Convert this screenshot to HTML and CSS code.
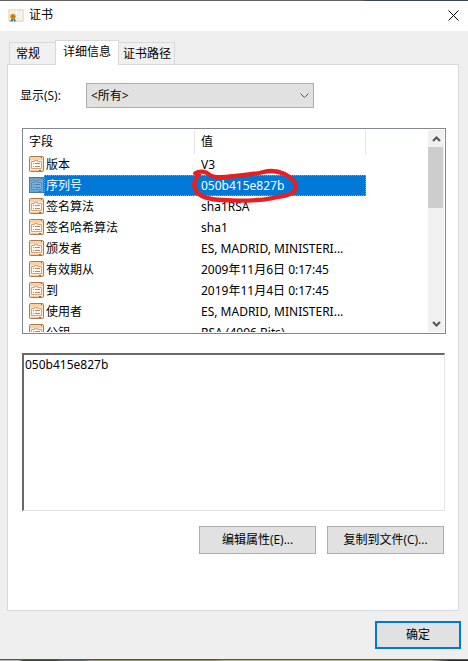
FILE: index.html
```html
<!DOCTYPE html>
<html lang="zh-CN">
<head>
<meta charset="utf-8">
<meta name="viewport" content="width=device-width, initial-scale=1">
<title>证书</title>
<link rel="stylesheet" href="styles.css">
</head>
<body>
<svg class="defs" aria-hidden="true">
  <symbol id="field" viewBox="0 0 15 16">
    <rect x=".5" y=".5" width="14" height="15" rx="1" fill="#fdebd8" stroke="#a87c54"/>
    <path d="M1 2.500H14" stroke="#f9cfa4" stroke-width="3"/>
    <path d="M12 1.500h1" stroke="#8a6240"/>
    <path d="M1 14.500H14" stroke="#f4cba2"/>
    <path d="M2.500 12.500v-7h3v-1h3v1h4v7z" fill="#fff8f0" stroke="#d2a47c"/>
    <path d="M4 7.500h1M6 7.500h5M4 10.500h1M6 10.500h5" stroke="#b88a60"/>
    <path d="M10 14.500h2" stroke="#8a6240"/>
  </symbol>
</svg>
<main class="window">
  <header class="titlebar">
    <svg class="app-icon" viewBox="0 0 16 14" aria-hidden="true">
      <rect x="1" y="1" width="14" height="11" fill="#fffdf8" stroke="#e7c79b"/>
      <path d="M3 3.500h5M9 3.500h4M8 6.500h5M8 9.500h5" stroke="#e9ebee" stroke-width="2"/>
      <path d="M3.500 9L2 13l2-1 1 1 .5-3 1 3 1-1 1 1-2-4z" fill="#2f78d2"/>
      <circle cx="5" cy="7.500" r="2.800" fill="#d99412"/>
      <circle cx="5" cy="7.500" r="1.300" fill="#b8720c"/>
    </svg>
    <h1>证书</h1>
    <button class="close" type="button" aria-label="关闭"><svg viewBox="0 0 11 11" aria-hidden="true"><path d="M.5.5l10 10M10.500.5l-10 10" fill="none" stroke="#000"/></svg></button>
  </header>
  <div class="content">
    <div class="tabs" role="tablist">
      <button class="tab" type="button" role="tab">常规</button>
      <button class="tab active" type="button" role="tab" aria-selected="true">详细信息</button>
      <button class="tab" type="button" role="tab">证书路径</button>
    </div>
    <section class="panel" role="tabpanel">
      <div class="filter">
        <label for="show">显示(S):</label>
        <div class="select-wrap">
          <select id="show"><option>&lt;所有&gt;</option></select>
          <svg class="chevron" viewBox="0 0 9 6" aria-hidden="true"><path d="M.5.5l4 4 4-4" fill="none" stroke="#555"/></svg>
        </div>
      </div>
      <div class="list">
        <div class="viewport">
          <table>
            <colgroup><col class="col-field"><col class="col-value"></colgroup>
            <thead><tr><th scope="col">字段</th><th scope="col">值</th></tr></thead>
            <tbody>
              <tr><td><div class="field"><svg><use href="#field"/></svg><span>版本</span></div></td><td><div class="value">V3</div></td></tr>
              <tr class="selected"><td><div class="field"><svg><use href="#field"/></svg><span>序列号</span></div></td><td><div class="value">050b415e827b</div>
                <svg class="mark" viewBox="60 144 330 108" aria-hidden="true">
                  <path d="M76 160C88 152 106 153 118 164C132 175 160 172 195 168C230 163 258 163 280 156C300 151 322 152 342 161C367 174 378 187 378 200C378 216 361 225 330 230C300 235 285 240 260 240C220 243 185 242 160 240C126 241 96 231 84 220C75 209 71 200 73 188C77 176 81 169 87 163" fill="none" stroke="#e81f20" stroke-width="13" stroke-linecap="round" stroke-linejoin="round"/>
                </svg></td></tr>
              <tr><td><div class="field"><svg><use href="#field"/></svg><span>签名算法</span></div></td><td><div class="value">sha1RSA</div></td></tr>
              <tr><td><div class="field"><svg><use href="#field"/></svg><span>签名哈希算法</span></div></td><td><div class="value">sha1</div></td></tr>
              <tr><td><div class="field"><svg><use href="#field"/></svg><span>颁发者</span></div></td><td><div class="value">ES, MADRID, MINISTERI...</div></td></tr>
              <tr><td><div class="field"><svg><use href="#field"/></svg><span>有效期从</span></div></td><td><div class="value">2009年11月6日 0:17:45</div></td></tr>
              <tr><td><div class="field"><svg><use href="#field"/></svg><span>到</span></div></td><td><div class="value">2019年11月4日 0:17:45</div></td></tr>
              <tr><td><div class="field"><svg><use href="#field"/></svg><span>使用者</span></div></td><td><div class="value">ES, MADRID, MINISTERI...</div></td></tr>
              <tr><td><div class="field"><svg><use href="#field"/></svg><span>公钥</span></div></td><td><div class="value">RSA (4096 Bits)</div></td></tr>
            </tbody>
          </table>
        </div>
        <div class="scrollbar">
          <button type="button" aria-label="向上滚动"><svg viewBox="0 0 9 6" aria-hidden="true"><path d="M1 5l3.500-3.500L8 5" fill="none" stroke="#555" stroke-width="2"/></svg></button>
          <div class="thumb"></div>
          <button class="down" type="button" aria-label="向下滚动"><svg viewBox="0 0 9 6" aria-hidden="true"><path d="M1 1l3.500 3.500L8 1" fill="none" stroke="#555" stroke-width="2"/></svg></button>
        </div>
      </div>
      <textarea class="detail" aria-label="字段值" readonly>050b415e827b</textarea>
      <div class="actions">
        <button class="btn" type="button">编辑属性(E)...</button>
        <button class="btn" type="button">复制到文件(C)...</button>
      </div>
    </section>
    <footer class="footer"><button class="btn primary" type="button">确定</button></footer>
  </div>
  <div class="backdrop"></div>
</main>
</body>
</html>
```
FILE: styles.css
```css
* { box-sizing: border-box; }

body {
  margin: 0;
  background: #efefef;
  color: #000;
  font: 12px/16px "Open Sans", "Noto Sans CJK SC", sans-serif;
}

button, select, textarea { font: inherit; color: inherit; margin: 0; border-radius: 0; }

svg { display: block; }

.defs { position: absolute; width: 0; height: 0; }

.window {
  display: flex;
  flex-direction: column;
  min-height: 100vh;
  border-top: 1px solid;
  border-image: linear-gradient(90deg, #636363 77%, #3a4654 78%) 1;
  border-image-width: 1px 0 0;
}

.backdrop {
  height: 2px;
  border-top: 1px solid #55564a;
  background: linear-gradient(90deg, #b5b5b5 4%, #3c4434 5% 12%, #65686a 13% 18%, #9a8b68 19% 46%, #b9b88c 48% 92%, #2c2c2c 96%);
}

.titlebar {
  display: flex;
  align-items: center;
  height: 30px;
  padding: 0 9px 2px 8px;
  background: #fff;
}

.app-icon { width: 16px; height: 14px; margin-top: 2px; }

.titlebar h1 { flex: 1; margin: 0 0 0 5px; font-size: 12px; font-weight: 400; }

.close { padding: 0; border: 0; background: none; }
.close svg { width: 11px; height: 11px; }

.content {
  display: flex;
  flex: 1;
  flex-direction: column;
  padding: 9px 7px 10px;
}

.tabs { display: flex; align-items: flex-end; height: 24px; padding-left: 2px; }

.tab {
  height: 22px;
  padding: 0 6px;
  border: 1px solid #d9d9d9;
  border-bottom: 0;
  background: #f0f0f0;
  line-height: 16px;
}
.tab:first-child { padding-right: 15px; border-right: 0; }
.tab:last-child { padding: 0 3px 0 4px; border-left: 0; }
.tab.active {
  z-index: 1;
  height: 25px;
  padding: 0 7px 3px;
  margin-bottom: -1px;
  background: #fff;
}

.panel {
  display: flex;
  flex: 1;
  flex-direction: column;
  margin-right: 2px;
  padding: 18px 13px 56px 14px;
  border: 1px solid #d9d9d9;
  background: #fff;
}

.filter { display: flex; align-items: center; margin-left: -2px; }
.filter label { width: 66px; }
.select-wrap { position: relative; flex: 0 1 228px; }
.select-wrap select {
  display: block;
  width: 100%;
  height: 25px;
  padding: 0 24px 0 4px;
  border: 1px solid #adadad;
  background: #e1e1e1;
  appearance: none;
}
.chevron {
  position: absolute;
  top: 10px;
  right: 5px;
  width: 9px;
  height: 6px;
  pointer-events: none;
}

.list {
  display: flex;
  height: 206px;
  margin-top: 20px;
  margin-right: -1px;
  padding: 1px 1px 1px 0;
  border: 1px solid #828790;
}
.viewport { flex: 1; overflow: hidden; }

table { width: 343px; border-collapse: separate; border-spacing: 0; table-layout: fixed; }
.col-field { width: 172px; }
th {
  height: 24px;
  padding: 0 6px;
  border-right: 1px solid #e5e5e5;
  font-weight: 400;
  text-align: left;
}
td { position: relative; height: 21px; padding: 0; white-space: nowrap; }

.field { display: flex; align-items: flex-start; height: 21px; padding-left: 6px; }
.field svg { width: 15px; height: 16px; margin-top: 2px; }
.field span, .value { flex: 1; height: 21px; border: 1px solid transparent; line-height: 19px; }
.field span { padding-left: 1px; }
.value { padding-left: 5px; }
.value, .detail { font-family: "Noto Sans", "Noto Sans CJK SC", sans-serif; }

.selected .field span, .selected .value {
  border: 1px dotted #ff8728;
  background: #0078d7;
  color: #fff;
}
.selected .field span { border-right: 0; }
.selected .value { border-left: 0; padding-left: 6px; }
.selected .field svg { background: #0078d7; }
.selected .field use { opacity: 0.45; }

.mark {
  position: absolute;
  z-index: 1;
  top: -7px;
  left: -5px;
  width: 110px;
  height: 36px;
  pointer-events: none;
}

.scrollbar { display: flex; flex: 0 0 16px; flex-direction: column; background: #f0f0f0; }
.scrollbar button {
  display: grid;
  place-items: center;
  height: 17px;
  padding: 0;
  border: 0;
  background: none;
}
.scrollbar svg { width: 9px; height: 6px; }
.scrollbar .thumb { width: 15px; height: 61px; background: #cdcdcd; }
.scrollbar .down { margin-top: auto; }

.detail {
  flex: 1;
  min-height: 100px;
  margin-top: 19px;
  padding: 2px 1px;
  border: solid;
  border-width: 2px 1px 1px 2px;
  border-color: #696969 #e3e3e3 #e3e3e3 #696969;
  outline: 0;
  background: #fff;
  resize: none;
}

.actions { display: flex; justify-content: flex-end; gap: 11px; margin-top: 15px; padding-right: 1px; }

.btn {
  width: 117px;
  height: 28px;
  padding: 0;
  border: 1px solid #adadad;
  background: #e1e1e1;
}
.btn.primary { width: 86px; border: 2px solid #0078d7; }

.footer { display: flex; justify-content: flex-end; margin-top: 10px; }
```
